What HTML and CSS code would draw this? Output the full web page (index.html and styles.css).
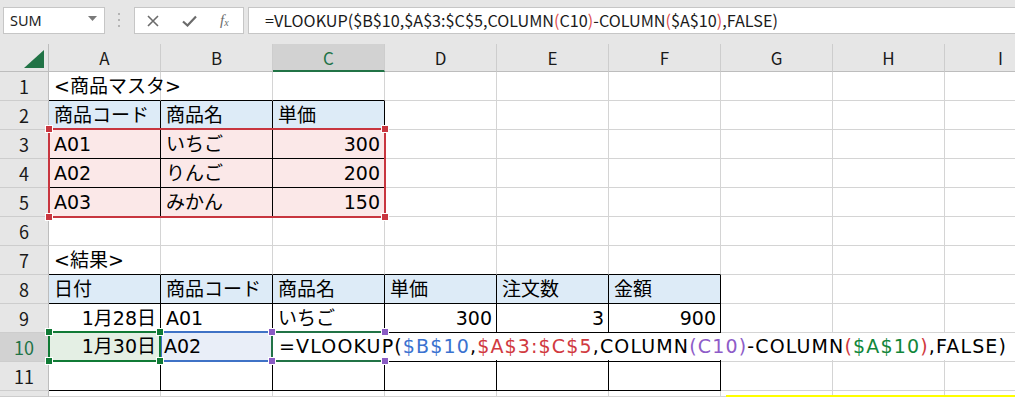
FILE: index.html
```html
<!DOCTYPE html>
<html lang="ja">
<head>
<meta charset="UTF-8">
<title>VLOOKUP COLUMN</title>
<link rel="stylesheet" href="styles.css">
</head>
<body>

<div class="formula-bar">
    <div class="name-box">
        <span>SUM</span>
        <svg class="caret" width="9" height="5" viewBox="0 0 9 5"><path d="M0 0h9L4.5 5z" fill="#7a7a7a"/></svg>
    </div>
    <svg class="grip" width="4" height="16" viewBox="0 0 4 16">
        <rect x="1" y="1" width="2" height="2" fill="#b4b4b4"/>
        <rect x="1" y="7" width="2" height="2" fill="#b4b4b4"/>
        <rect x="1" y="13" width="2" height="2" fill="#b4b4b4"/>
    </svg>
    <div class="fx-buttons">
        <svg width="12" height="12" viewBox="0 0 12 12"><path d="M1 1l10 10M11 1L1 11" stroke="#6b6b6b" stroke-width="1.6"/></svg>
        <svg width="15" height="12" viewBox="0 0 15 12"><path d="M1 6.5l4.5 4L14 1.5" stroke="#6b6b6b" stroke-width="2.2" fill="none"/></svg>
        <span class="fx">f<sub>x</sub></span>
    </div>
    <div class="formula-input">=VLOOKUP($B$10,$A$3:$C$5,COLUMN<span class="p-red">(</span>C10<span class="p-red">)</span>-COLUMN<span class="p-red">(</span>$A$10<span class="p-red">)</span>,FALSE)</div>
</div>

<div class="sheet">
    <!-- 列見出し -->
    <div class="corner"><svg width="20" height="18" viewBox="0 0 20 18"><path d="M20 0V18H0z" fill="#217346"/></svg></div>
    <div class="colh">A</div>
    <div class="colh">B</div>
    <div class="colh sel">C</div>
    <div class="colh">D</div>
    <div class="colh">E</div>
    <div class="colh">F</div>
    <div class="colh">G</div>
    <div class="colh">H</div>
    <div class="colh">I</div>

    <!-- 1 -->
    <div class="rowh">1</div>
    <div class="c bb">&lt;商品マスタ&gt;</div><div class="c bb"></div><div class="c bb"></div>
    <div class="c"></div><div class="c"></div><div class="c"></div><div class="c"></div><div class="c"></div><div class="c"></div>

    <!-- 2 -->
    <div class="rowh">2</div>
    <div class="c hd bk">商品コード</div><div class="c hd bk">商品名</div><div class="c hd bk">単価</div>
    <div class="c"></div><div class="c"></div><div class="c"></div><div class="c"></div><div class="c"></div><div class="c"></div>

    <!-- 3 -->
    <div class="rowh">3</div>
    <div class="c pk bk">A01</div><div class="c pk bk">いちご</div><div class="c pk bk r">300</div>
    <div class="c"></div><div class="c"></div><div class="c"></div><div class="c"></div><div class="c"></div><div class="c"></div>

    <!-- 4 -->
    <div class="rowh">4</div>
    <div class="c pk bk">A02</div><div class="c pk bk">りんご</div><div class="c pk bk r">200</div>
    <div class="c"></div><div class="c"></div><div class="c"></div><div class="c"></div><div class="c"></div><div class="c"></div>

    <!-- 5 -->
    <div class="rowh">5</div>
    <div class="c pk bk">A03</div><div class="c pk bk">みかん</div><div class="c pk bk r">150</div>
    <div class="c"></div><div class="c"></div><div class="c"></div><div class="c"></div><div class="c"></div><div class="c"></div>

    <!-- 6 -->
    <div class="rowh">6</div>
    <div class="c"></div><div class="c"></div><div class="c"></div><div class="c"></div><div class="c"></div><div class="c"></div><div class="c"></div><div class="c"></div><div class="c"></div>

    <!-- 7 -->
    <div class="rowh">7</div>
    <div class="c bb">&lt;結果&gt;</div><div class="c bb"></div><div class="c bb"></div><div class="c bb"></div><div class="c bb"></div><div class="c bb"></div>
    <div class="c"></div><div class="c"></div><div class="c"></div>

    <!-- 8 -->
    <div class="rowh">8</div>
    <div class="c hd bk">日付</div><div class="c hd bk">商品コード</div><div class="c hd bk">商品名</div>
    <div class="c hd bk">単価</div><div class="c hd bk">注文数</div><div class="c hd bk">金額</div>
    <div class="c"></div><div class="c"></div><div class="c"></div>

    <!-- 9 -->
    <div class="rowh">9</div>
    <div class="c bk r">1月28日</div><div class="c bk">A01</div><div class="c bk">いちご</div>
    <div class="c bk r">300</div><div class="c bk r">3</div><div class="c bk r">900</div>
    <div class="c"></div><div class="c"></div><div class="c"></div>

    <!-- 10 -->
    <div class="rowh sel">10</div>
    <div class="c bk r">1月30日</div><div class="c bk">A02</div><div class="c bk"></div>
    <div class="c bk"></div><div class="c bk"></div><div class="c bk"></div>
    <div class="c"></div><div class="c"></div><div class="c"></div>

    <!-- 11 -->
    <div class="rowh">11</div>
    <div class="c bk"></div><div class="c bk"></div><div class="c bk"></div><div class="c bk"></div><div class="c bk"></div><div class="c bk"></div>
    <div class="c"></div><div class="c"></div><div class="c"></div>

    <!-- 12 (下端で切れる) -->
    <div class="rowh"></div>
    <div class="c"></div><div class="c"></div><div class="c"></div><div class="c"></div><div class="c"></div><div class="c"></div><div class="c"></div><div class="c"></div><div class="c"></div>

    <!-- 参照範囲の色枠 -->
    <div class="ref ref-red">
        <i class="knob tl"></i><i class="knob tr"></i><i class="knob bl"></i><i class="knob br"></i>
    </div>
    <div class="ref ref-blue"></div>
    <div class="ref ref-green">
        <span class="val">1月30日</span>
        <i class="knob tl"></i><i class="knob tr"></i><i class="knob bl"></i><i class="knob br"></i>
    </div>
    <div class="editor">=VLOOKUP(<span class="t-blue">$B$10</span>,<span class="t-red">$A$3:$C$5</span>,COLUMN<span class="t-purple">(C10)</span>-COLUMN<span class="t-red">(</span><span class="t-green">$A$10</span><span class="t-red">)</span>,FALSE)</div>
    <div class="active">
        <i class="knob tl"></i><i class="knob tr"></i><i class="knob bl"></i><i class="knob br"></i>
    </div>
    <div class="ref-blue-text">A02</div>
</div>

<div class="yellow-line"></div>

</body>
</html>
```

FILE: styles.css
```css
body {
    margin: 0;
    background: #ffffff;
    font-family: "DejaVu Sans", "Noto Sans CJK JP", sans-serif;
    color: #000000;
    overflow: hidden;
    width: 1015px;
    height: 397px;
    position: relative;
}

/* 数式バー */
.formula-bar {
    height: 44px;
    box-sizing: border-box;
    padding: 7px 0 0 3px;
    background: #e6e6e6;
    display: flex;
    align-items: flex-start;
}

.name-box {
    width: 102px;
    height: 27px;
    box-sizing: border-box;
    background: #ffffff;
    border: 1px solid #c6c6c6;
    display: flex;
    align-items: center;
    justify-content: space-between;
    padding: 0 7px 2px 6px;
    font-family: "Noto Sans", sans-serif;
    font-size: 14.5px;
    color: #222;
}

.caret {
    margin-top: -3px;
}

.grip {
    margin: 5px 13px 0 12px;
}

.fx-buttons {
    width: 110px;
    height: 27px;
    box-sizing: border-box;
    background: #ffffff;
    border: 1px solid #c6c6c6;
    display: flex;
    align-items: center;
    gap: 23px;
    padding-left: 12px;
}

.fx {
    font-family: "Liberation Serif", serif;
    font-style: italic;
    font-size: 15px;
    color: #6b6b6b;
    line-height: 1;
}

.fx sub {
    font-size: 10px;
    vertical-align: -1px;
}

.formula-input {
    flex: 1;
    margin-left: 4px;
    height: 27px;
    box-sizing: border-box;
    background: #ffffff;
    border: 1px solid #c6c6c6;
    border-right: none;
    padding-left: 16px;
    font-family: "Noto Sans CJK JP", sans-serif;
    font-size: 16.2px;
    line-height: 24px;
    white-space: nowrap;
    color: #1a1a1a;
}

.p-red {
    color: #e0504f;
}

/* シート */
.sheet {
    position: relative;
    display: grid;
    grid-template-columns: 49px repeat(9, 112px);
    grid-template-rows: 28px repeat(11, 29px) 6px;
    overflow: hidden;
}

.corner {
    background: #e6e6e6;
    border-right: 1px solid #bdbdbd;
    border-bottom: 1px solid #bdbdbd;
    display: flex;
    align-items: flex-end;
    justify-content: flex-end;
    padding: 0 4px 3px 0;
}

.colh {
    background: #e6e6e6;
    border-right: 1px solid #cdcdcd;
    border-bottom: 1px solid #bdbdbd;
    text-align: center;
    font-family: "Noto Sans CJK JP", sans-serif;
    font-size: 17px;
    line-height: 27px;
    color: #1a1a1a;
}

.colh.sel {
    background: #d2d2d2;
    color: #217346;
    border-bottom: 2px solid #217346;
}

.rowh {
    background: #e6e6e6;
    border-right: 1px solid #bdbdbd;
    border-bottom: 1px solid #cdcdcd;
    text-align: center;
    font-family: "Noto Sans CJK JP", sans-serif;
    font-size: 18px;
    line-height: 28px;
    color: #1a1a1a;
}

.rowh.sel {
    background: #d2d2d2;
    color: #217346;
}

.c {
    border-right: 1px solid #d4d4d4;
    border-bottom: 1px solid #d4d4d4;
    padding: 0 4px 0 5px;
    font-size: 19px;
    line-height: 28px;
    white-space: nowrap;
}

.c.hd {
    background: #ddebf7;
}

.c.pk {
    background: #fbe8e8;
}

.c.bk {
    border-right-color: #000000;
    border-bottom-color: #000000;
}

.c.bb {
    border-bottom-color: #000000;
}

.c.r {
    text-align: right;
}

/* 参照の色枠 */
.ref {
    position: absolute;
    box-sizing: border-box;
    border: 2px solid;
}

.ref-red {
    left: 48px;
    top: 84px;
    width: 338px;
    height: 90px;
    border-color: #c8363f;
}

.ref-red .knob {
    background: #c8363f;
}

.ref-blue {
    left: 160px;
    top: 287px;
    width: 113px;
    height: 31px;
    border-color: #3f72c6;
    background: #e9eef8;
}

.ref-blue-text {
    position: absolute;
    left: 164px;
    top: 288px;
    font-size: 19px;
    line-height: 28px;
}

.ref-green {
    left: 48px;
    top: 287px;
    width: 113px;
    height: 31px;
    border-color: #107a35;
    background: #e4efe4;
    font-size: 19px;
    line-height: 27px;
    text-align: right;
    padding-right: 3px;
}

.ref-green .knob {
    background: #107a35;
}

.knob {
    position: absolute;
    width: 6px;
    height: 6px;
    outline: 1px solid #ffffff;
}

.knob.tl { left: -4px; top: -4px; }
.knob.tr { right: -4px; top: -4px; }
.knob.bl { left: -4px; bottom: -4px; }
.knob.br { right: -4px; bottom: -4px; }

.editor {
    position: absolute;
    left: 273px;
    top: 289px;
    width: 760px;
    height: 27px;
    background: #ffffff;
    padding-left: 6px;
    font-size: 19px;
    letter-spacing: 1.15px;
    line-height: 27px;
    white-space: nowrap;
}

.active {
    position: absolute;
    left: 271px;
    top: 287px;
    width: 114px;
    height: 31px;
    box-sizing: border-box;
    border: 2px solid #217346;
    border-right: none;
}

.active .knob {
    background: #8a5cc4;
}

.active .knob.tr,
.active .knob.br {
    right: -3px;
}

.t-blue { color: #3a72d0; }
.t-red { color: #d13a3f; }
.t-purple { color: #8e5cc8; }
.t-green { color: #10863a; }

.yellow-line {
    position: absolute;
    left: 726px;
    top: 395px;
    width: 289px;
    height: 2px;
    background: #ffff00;
}
```
